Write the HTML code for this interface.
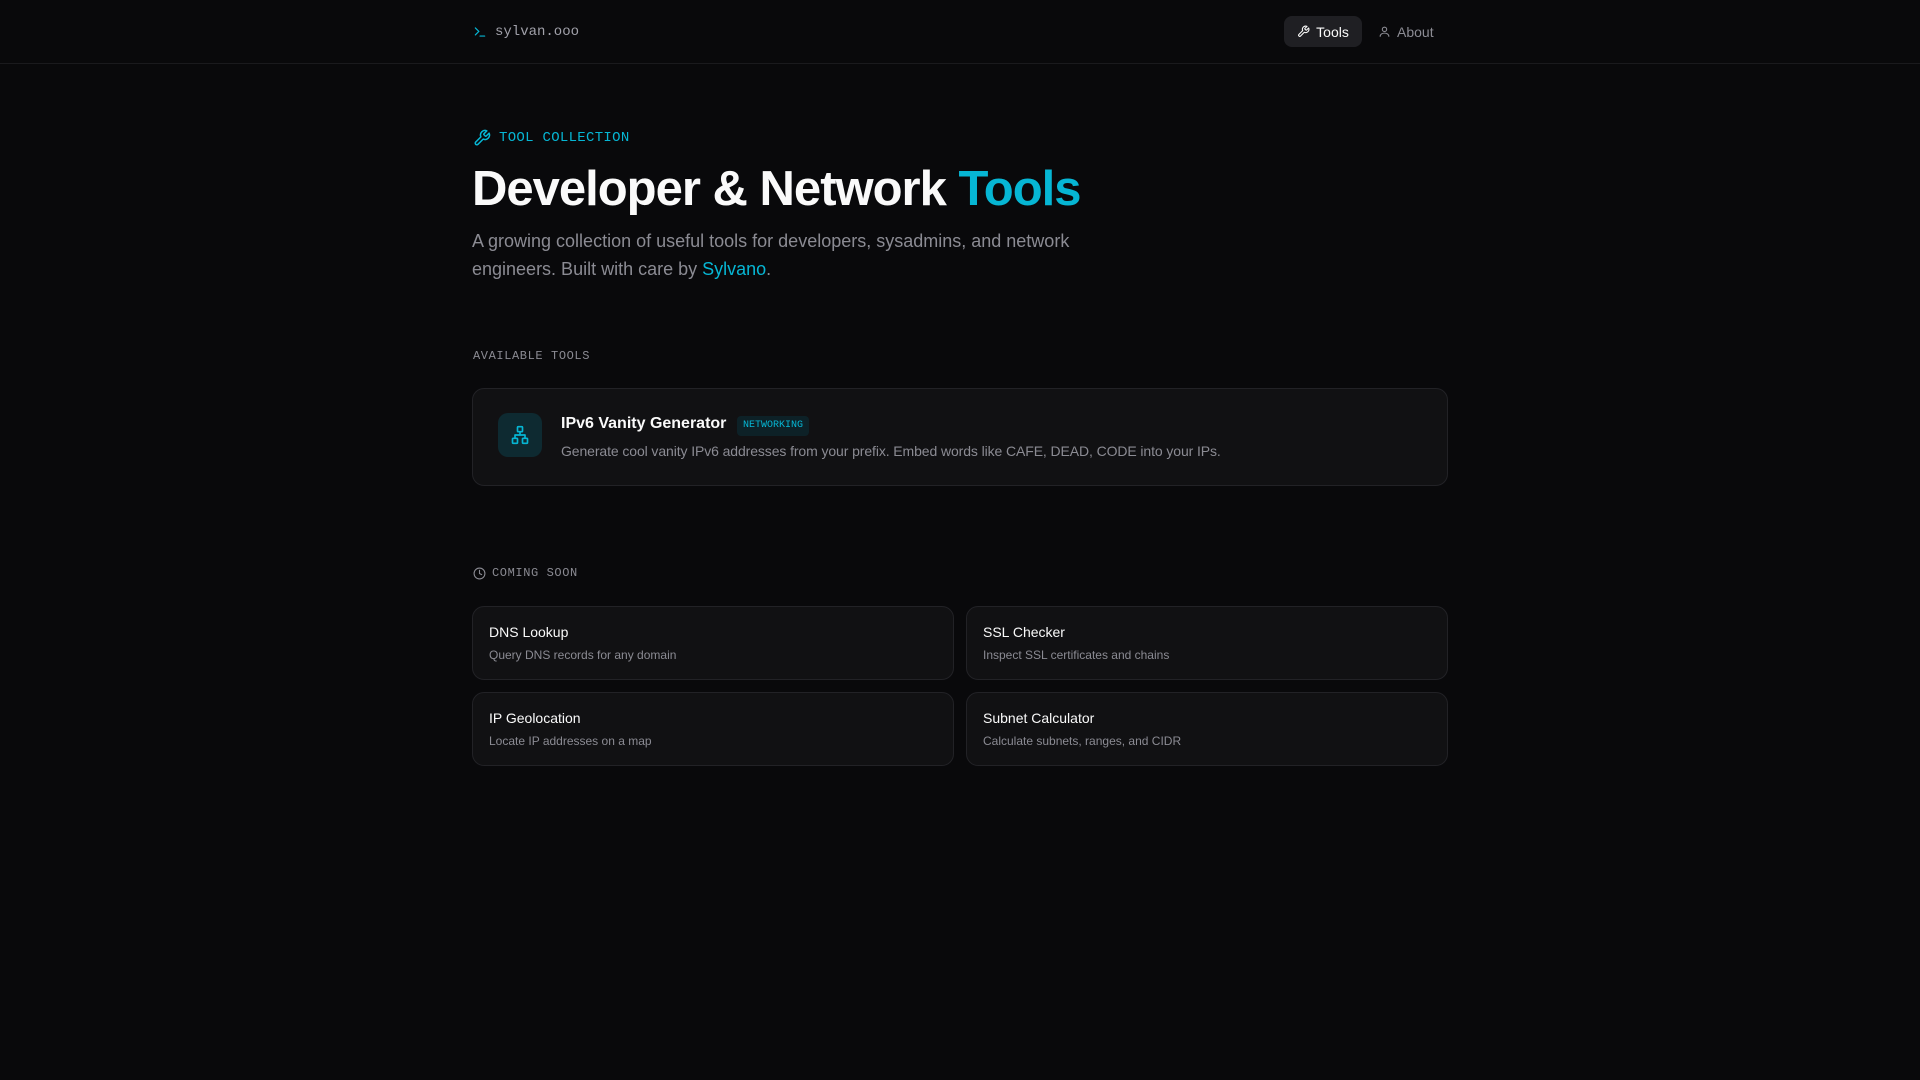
<!DOCTYPE html>
<html><head><meta charset="utf-8"><style>
*{box-sizing:border-box;margin:0;padding:0}
body{width:1920px;height:1080px;background:#09090b;color:#fafafa;font-family:"Liberation Sans",sans-serif;overflow:hidden;position:relative}
.mono{font-family:"Liberation Mono",monospace}
header{position:absolute;left:0;top:0;width:1920px;height:64px;border-bottom:1px solid #1a1a1d}
.abs{position:absolute}
.logo{left:473px;top:24px;font-size:14px;color:#a1a1aa;display:flex;align-items:center;gap:8px}
.pill{left:1284px;top:16px;width:78px;height:31px;background:#1f1f23;border-radius:8px;display:flex;align-items:center;justify-content:center;gap:6px;font-size:14px;color:#fafafa}
.about{left:1378px;top:16px;height:31px;display:flex;align-items:center;gap:6px;font-size:14px;color:#8b8b93}
.cyan{color:#06b6d4}
.card{background:#111113;border:1px solid #222226;border-radius:12px}
.small h3{font-size:14px;font-weight:normal;color:#fafafa;position:absolute;left:16px;top:17px}
.small p{font-size:12px;color:#8b8b93;position:absolute;left:16px;top:41px}
</style></head><body>
<header>
<div class="abs logo mono"><svg width="14" height="14" viewBox="0 0 24 24" fill="none" stroke="#06b6d4" stroke-width="2" stroke-linecap="round"><path d="M4 17l6-6-6-6M12 19h8"/></svg>sylvan.ooo</div>
<div class="abs pill"><svg width="13" height="13" viewBox="0 0 24 24" fill="none" stroke="#fafafa" stroke-width="2" stroke-linecap="round" stroke-linejoin="round"><path d="M14.7 6.3a1 1 0 0 0 0 1.4l1.6 1.6a1 1 0 0 0 1.4 0l3.77-3.77a6 6 0 0 1-7.94 7.94l-6.910 6.91a2.12 2.12 0 0 1-3-3l6.91-6.91a6 6 0 0 1 7.94-7.94l-3.76 3.76z"/></svg>Tools</div>
<div class="abs about"><svg width="13" height="13" viewBox="0 0 24 24" fill="none" stroke="#8b8b93" stroke-width="2" stroke-linecap="round"><circle cx="12" cy="8" r="4"/><path d="M4 21c0-4 4-6 8-6s8 2 8 6"/></svg>About</div>
</header>

<div class="abs mono cyan" style="left:473px;top:129px;font-size:14px;display:flex;align-items:center;gap:8px;letter-spacing:0.3px"><svg width="18" height="18" viewBox="0 0 24 24" fill="none" stroke="#06b6d4" stroke-width="2" stroke-linecap="round" stroke-linejoin="round"><path d="M14.7 6.3a1 1 0 0 0 0 1.4l1.6 1.6a1 1 0 0 0 1.4 0l3.77-3.77a6 6 0 0 1-7.94 7.94l-6.91 6.91a2.12 2.12 0 0 1-3-3l6.91-6.91a6 6 0 0 1 7.94-7.94l-3.76 3.76z"/></svg>TOOL COLLECTION</div>
<h1 class="abs" style="left:472px;top:161px;font-size:49px;font-weight:bold;letter-spacing:-1px;white-space:nowrap">Developer &amp; Network <span class="cyan">Tools</span></h1>
<p class="abs" style="left:472px;top:227px;width:660px;font-size:18px;line-height:28px;color:#8b8b93">A growing collection of useful tools for developers, sysadmins, and network engineers. Built with care by <span class="cyan">Sylvano</span>.</p>

<div class="abs mono" style="left:473px;top:349px;font-size:12px;color:#8b8b93;letter-spacing:0.6px">AVAILABLE TOOLS</div>
<div class="abs card" style="left:472px;top:388px;width:976px;height:98px">
<div class="abs" style="left:25px;top:24px;width:44px;height:44px;border-radius:10px;background:#0e2a31;display:flex;align-items:center;justify-content:center"><svg width="20" height="20" viewBox="0 0 24 24" fill="none" stroke="#06b6d4" stroke-width="2" stroke-linejoin="round"><rect x="9" y="2" width="6" height="6" rx="1"/><rect x="3" y="16" width="6" height="6" rx="1"/><rect x="15" y="16" width="6" height="6" rx="1"/><path d="M12 8v4M6 16v-4h12v4"/></svg></div>
<div class="abs" style="left:88px;top:26px;font-size:16px;font-weight:bold;color:#fafafa">IPv6 Vanity Generator</div>
<div class="abs mono cyan" style="left:264px;top:27px;height:20px;padding:0 6px;background:#0d2127;border-radius:4px;font-size:10px;line-height:20px">NETWORKING</div>
<div class="abs" style="left:88px;top:54px;font-size:14px;color:#8b8b93;letter-spacing:-0.1px">Generate cool vanity IPv6 addresses from your prefix. Embed words like CAFE, DEAD, CODE into your IPs.</div>
</div>

<div class="abs mono" style="left:473px;top:566px;font-size:12px;color:#8b8b93;letter-spacing:0.6px;display:flex;align-items:center;gap:6px"><svg width="13" height="13" viewBox="0 0 24 24" fill="none" stroke="#8b8b93" stroke-width="2" stroke-linecap="round"><circle cx="12" cy="12" r="10"/><path d="M12 6v6l4 2"/></svg>COMING SOON</div>

<div class="abs card small" style="left:472px;top:606px;width:482px;height:74px"><h3>DNS Lookup</h3><p>Query DNS records for any domain</p></div>
<div class="abs card small" style="left:966px;top:606px;width:482px;height:74px"><h3>SSL Checker</h3><p>Inspect SSL certificates and chains</p></div>
<div class="abs card small" style="left:472px;top:692px;width:482px;height:74px"><h3>IP Geolocation</h3><p>Locate IP addresses on a map</p></div>
<div class="abs card small" style="left:966px;top:692px;width:482px;height:74px"><h3>Subnet Calculator</h3><p>Calculate subnets, ranges, and CIDR</p></div>
</body></html>
